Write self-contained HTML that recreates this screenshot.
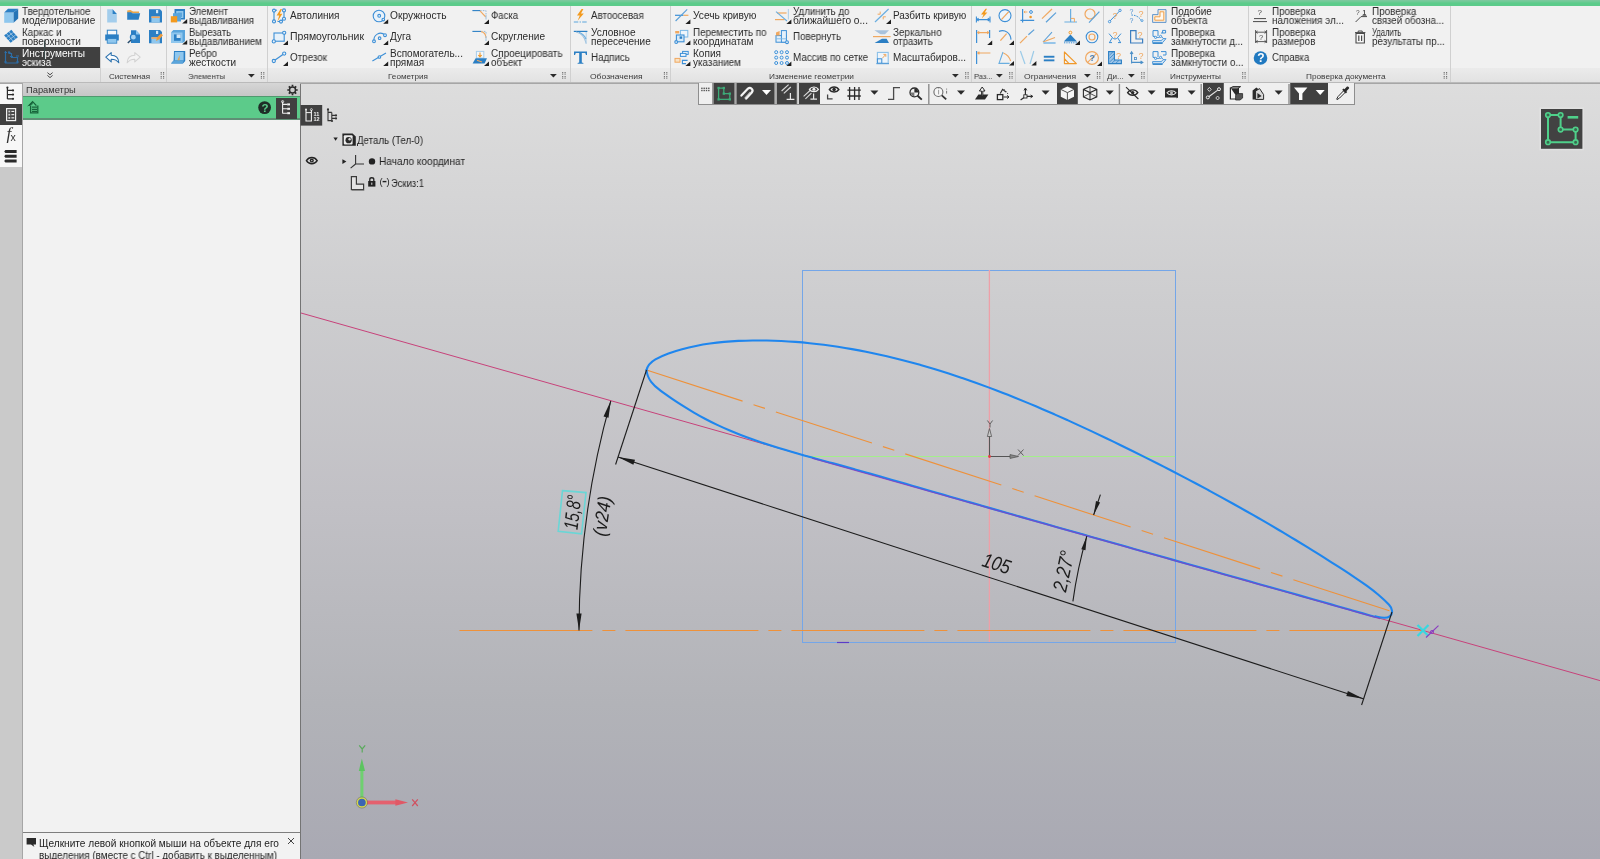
<!DOCTYPE html>
<html lang="ru"><head><meta charset="utf-8"><title>KOMPAS-3D</title><style>
html,body{margin:0;padding:0;}
html{width:1600px;height:859px;overflow:hidden;}
body{width:1600px;height:859px;overflow:hidden;position:relative;font-family:"Liberation Sans",sans-serif;background:#c8c8cc;}
.t{position:absolute;white-space:pre;line-height:1;transform-origin:0 0;will-change:transform;}
.a{position:absolute;}
svg{position:absolute;overflow:visible;}
</style></head><body>
<div id="root" style="position:absolute;left:0;top:0;width:1600px;height:859px;overflow:hidden;">
<div class="a" id="vp" style="left:0;top:83px;width:1600px;height:776px;background:linear-gradient(180deg,#dddddd 0%,#cdcdcf 28.6%,#c1c0c5 54.4%,#b2b3b8 80%,#a9a9b3 100%);"></div>
<div class="a" style="left:0;top:0;width:1600px;height:6px;background:linear-gradient(180deg,#80c8a0 0,#6ccb94 2px,#5ccb8a 3px,#5ccb8a 100%);"></div>
<div class="a" id="rib" style="left:0;top:6px;width:1600px;height:62px;background:#f1f1f1;"></div>
<div class="a" id="riblab" style="left:0;top:68px;width:1600px;height:14px;background:linear-gradient(180deg,#ebebeb,#e2e2e2);"></div>
<div class="a" style="left:0;top:82px;width:1600px;height:2px;background:linear-gradient(180deg,#c4c4c4,#9c9c9c);"></div>
<div class="a" style="left:100px;top:6px;width:1px;height:76px;background:#d0d0d0;"></div>
<div class="a" style="left:166px;top:6px;width:1px;height:76px;background:#d0d0d0;"></div>
<div class="a" style="left:267px;top:6px;width:1px;height:76px;background:#d0d0d0;"></div>
<div class="a" style="left:570px;top:6px;width:1px;height:76px;background:#d0d0d0;"></div>
<div class="a" style="left:670px;top:6px;width:1px;height:76px;background:#d0d0d0;"></div>
<div class="a" style="left:971px;top:6px;width:1px;height:76px;background:#d0d0d0;"></div>
<div class="a" style="left:1015px;top:6px;width:1px;height:76px;background:#d0d0d0;"></div>
<div class="a" style="left:1103px;top:6px;width:1px;height:76px;background:#d0d0d0;"></div>
<div class="a" style="left:1147px;top:6px;width:1px;height:76px;background:#d0d0d0;"></div>
<div class="a" style="left:1248px;top:6px;width:1px;height:76px;background:#d0d0d0;"></div>
<div class="a" style="left:1450px;top:6px;width:1px;height:76px;background:#d0d0d0;"></div>
<div class="a" style="left:0;top:47px;width:100px;height:21px;background:#404040;"></div>
<span class="t" style="left:22.0px;top:7.04px;font-size:10px;color:#2b2b2b;transform:scaleX(0.9740);">Твердотельное</span>
<span class="t" style="left:22.0px;top:16.04px;font-size:10px;color:#2b2b2b;transform:scaleX(0.9964);">моделирование</span>
<span class="t" style="left:22.0px;top:28.04px;font-size:10px;color:#2b2b2b;transform:scaleX(0.9761);">Каркас и</span>
<span class="t" style="left:22.0px;top:37.03px;font-size:10px;color:#2b2b2b;transform:scaleX(1.0096);">поверхности</span>
<span class="t" style="left:22.0px;top:49.03px;font-size:10px;color:#ffffff;transform:scaleX(1.0103);">Инструменты</span>
<span class="t" style="left:22.0px;top:58.03px;font-size:10px;color:#ffffff;transform:scaleX(0.9597);">эскиза</span>
<span class="t" style="left:189.0px;top:7.04px;font-size:10px;color:#2b2b2b;transform:scaleX(0.9560);">Элемент</span>
<span class="t" style="left:189.0px;top:16.04px;font-size:10px;color:#2b2b2b;transform:scaleX(0.9603);">выдавливания</span>
<span class="t" style="left:189.0px;top:28.04px;font-size:10px;color:#2b2b2b;transform:scaleX(0.9442);">Вырезать</span>
<span class="t" style="left:189.0px;top:37.03px;font-size:10px;color:#2b2b2b;transform:scaleX(0.9770);">выдавливанием</span>
<span class="t" style="left:189.0px;top:49.03px;font-size:10px;color:#2b2b2b;transform:scaleX(0.9814);">Ребро</span>
<span class="t" style="left:189.0px;top:58.03px;font-size:10px;color:#2b2b2b;transform:scaleX(0.9990);">жесткости</span>
<span class="t" style="left:290.0px;top:11.04px;font-size:10px;color:#2b2b2b;transform:scaleX(0.9994);">Автолиния</span>
<span class="t" style="left:290.0px;top:32.03px;font-size:10px;color:#2b2b2b;transform:scaleX(1.0469);">Прямоугольник</span>
<span class="t" style="left:290.0px;top:53.03px;font-size:10px;color:#2b2b2b;transform:scaleX(0.9822);">Отрезок</span>
<span class="t" style="left:390.0px;top:11.04px;font-size:10px;color:#2b2b2b;transform:scaleX(1.0220);">Окружность</span>
<span class="t" style="left:390.0px;top:32.03px;font-size:10px;color:#2b2b2b;transform:scaleX(1.0007);">Дуга</span>
<span class="t" style="left:390.0px;top:49.03px;font-size:10px;color:#2b2b2b;transform:scaleX(0.9940);">Вспомогатель...</span>
<span class="t" style="left:390.0px;top:58.03px;font-size:10px;color:#2b2b2b;transform:scaleX(0.9959);">прямая</span>
<span class="t" style="left:490.5px;top:11.04px;font-size:10px;color:#2b2b2b;transform:scaleX(0.9531);">Фаска</span>
<span class="t" style="left:490.5px;top:32.03px;font-size:10px;color:#2b2b2b;transform:scaleX(1.0085);">Скругление</span>
<span class="t" style="left:490.5px;top:49.03px;font-size:10px;color:#2b2b2b;transform:scaleX(0.9918);">Спроецировать</span>
<span class="t" style="left:490.5px;top:58.03px;font-size:10px;color:#2b2b2b;transform:scaleX(0.9798);">объект</span>
<span class="t" style="left:591.0px;top:11.04px;font-size:10px;color:#2b2b2b;transform:scaleX(0.9742);">Автоосевая</span>
<span class="t" style="left:591.0px;top:28.04px;font-size:10px;color:#2b2b2b;transform:scaleX(1.0078);">Условное</span>
<span class="t" style="left:591.0px;top:37.03px;font-size:10px;color:#2b2b2b;transform:scaleX(0.9986);">пересечение</span>
<span class="t" style="left:591.0px;top:53.03px;font-size:10px;color:#2b2b2b;transform:scaleX(0.9788);">Надпись</span>
<span class="t" style="left:692.5px;top:11.04px;font-size:10px;color:#2b2b2b;transform:scaleX(1.0203);">Усечь кривую</span>
<span class="t" style="left:692.5px;top:28.04px;font-size:10px;color:#2b2b2b;transform:scaleX(0.9796);">Переместить по</span>
<span class="t" style="left:692.5px;top:37.03px;font-size:10px;color:#2b2b2b;transform:scaleX(1.0060);">координатам</span>
<span class="t" style="left:692.5px;top:49.03px;font-size:10px;color:#2b2b2b;transform:scaleX(1.0067);">Копия</span>
<span class="t" style="left:692.5px;top:58.03px;font-size:10px;color:#2b2b2b;transform:scaleX(0.9846);">указанием</span>
<span class="t" style="left:793.0px;top:7.04px;font-size:10px;color:#2b2b2b;transform:scaleX(0.9757);">Удлинить до</span>
<span class="t" style="left:793.0px;top:16.04px;font-size:10px;color:#2b2b2b;transform:scaleX(1.0163);">ближайшего о...</span>
<span class="t" style="left:793.0px;top:32.03px;font-size:10px;color:#2b2b2b;transform:scaleX(0.9718);">Повернуть</span>
<span class="t" style="left:793.0px;top:53.03px;font-size:10px;color:#2b2b2b;transform:scaleX(0.9830);">Массив по сетке</span>
<span class="t" style="left:893.0px;top:11.04px;font-size:10px;color:#2b2b2b;transform:scaleX(0.9964);">Разбить кривую</span>
<span class="t" style="left:893.0px;top:28.04px;font-size:10px;color:#2b2b2b;transform:scaleX(0.9848);">Зеркально</span>
<span class="t" style="left:893.0px;top:37.03px;font-size:10px;color:#2b2b2b;transform:scaleX(0.9656);">отразить</span>
<span class="t" style="left:893.0px;top:53.03px;font-size:10px;color:#2b2b2b;transform:scaleX(0.9981);">Масштабиров...</span>
<span class="t" style="left:1170.5px;top:7.04px;font-size:10px;color:#2b2b2b;transform:scaleX(0.9923);">Подобие</span>
<span class="t" style="left:1170.5px;top:16.04px;font-size:10px;color:#2b2b2b;transform:scaleX(0.9786);">объекта</span>
<span class="t" style="left:1170.5px;top:28.04px;font-size:10px;color:#2b2b2b;transform:scaleX(0.9822);">Проверка</span>
<span class="t" style="left:1170.5px;top:37.03px;font-size:10px;color:#2b2b2b;transform:scaleX(0.9722);">замкнутости д...</span>
<span class="t" style="left:1170.5px;top:49.03px;font-size:10px;color:#2b2b2b;transform:scaleX(0.9822);">Проверка</span>
<span class="t" style="left:1170.5px;top:58.03px;font-size:10px;color:#2b2b2b;transform:scaleX(0.9824);">замкнутости о...</span>
<span class="t" style="left:1271.7px;top:7.04px;font-size:10px;color:#2b2b2b;transform:scaleX(0.9777);">Проверка</span>
<span class="t" style="left:1271.7px;top:16.04px;font-size:10px;color:#2b2b2b;transform:scaleX(0.9850);">наложения эл...</span>
<span class="t" style="left:1271.7px;top:28.04px;font-size:10px;color:#2b2b2b;transform:scaleX(0.9777);">Проверка</span>
<span class="t" style="left:1271.7px;top:37.03px;font-size:10px;color:#2b2b2b;transform:scaleX(0.9737);">размеров</span>
<span class="t" style="left:1271.7px;top:53.03px;font-size:10px;color:#2b2b2b;transform:scaleX(0.9507);">Справка</span>
<span class="t" style="left:1371.7px;top:7.04px;font-size:10px;color:#2b2b2b;transform:scaleX(0.9889);">Проверка</span>
<span class="t" style="left:1371.7px;top:16.04px;font-size:10px;color:#2b2b2b;transform:scaleX(0.9630);">связей обозна...</span>
<span class="t" style="left:1371.7px;top:28.04px;font-size:10px;color:#2b2b2b;transform:scaleX(0.7673);">Удалить</span>
<span class="t" style="left:1371.7px;top:37.03px;font-size:10px;color:#2b2b2b;transform:scaleX(0.9825);">результаты пр...</span>
<span class="t" style="left:109.0px;top:73.23px;font-size:8px;color:#3a3a3a;transform:scaleX(1.0008);">Системная</span>
<span class="t" style="left:188.0px;top:73.23px;font-size:8px;color:#3a3a3a;transform:scaleX(0.9638);">Элементы</span>
<span class="t" style="left:388.0px;top:73.23px;font-size:8px;color:#3a3a3a;transform:scaleX(1.0179);">Геометрия</span>
<span class="t" style="left:589.5px;top:73.23px;font-size:8px;color:#3a3a3a;transform:scaleX(1.0636);">Обозначения</span>
<span class="t" style="left:768.7px;top:73.23px;font-size:8px;color:#3a3a3a;transform:scaleX(1.0344);">Изменение геометрии</span>
<span class="t" style="left:974.0px;top:73.23px;font-size:8px;color:#3a3a3a;transform:scaleX(0.9360);">Раз...</span>
<span class="t" style="left:1024.0px;top:73.23px;font-size:8px;color:#3a3a3a;transform:scaleX(1.0663);">Ограничения</span>
<span class="t" style="left:1107.0px;top:73.23px;font-size:8px;color:#3a3a3a;transform:scaleX(1.0083);">Ди...</span>
<span class="t" style="left:1169.5px;top:73.23px;font-size:8px;color:#3a3a3a;transform:scaleX(1.0222);">Инструменты</span>
<span class="t" style="left:1305.5px;top:73.23px;font-size:8px;color:#3a3a3a;transform:scaleX(1.0316);">Проверка документа</span>
<svg style="left:247.6px;top:73.9px" width="6.8" height="3.6"><path d="M0 0H6.8L3.4 3.6Z" fill="#2b2b2b"/></svg>
<svg style="left:549.6px;top:73.9px" width="6.8" height="3.6"><path d="M0 0H6.8L3.4 3.6Z" fill="#2b2b2b"/></svg>
<svg style="left:951.6px;top:73.9px" width="6.8" height="3.6"><path d="M0 0H6.8L3.4 3.6Z" fill="#2b2b2b"/></svg>
<svg style="left:996.1px;top:73.9px" width="6.8" height="3.6"><path d="M0 0H6.8L3.4 3.6Z" fill="#2b2b2b"/></svg>
<svg style="left:1084.1px;top:73.9px" width="6.8" height="3.6"><path d="M0 0H6.8L3.4 3.6Z" fill="#2b2b2b"/></svg>
<svg style="left:1127.6px;top:73.9px" width="6.8" height="3.6"><path d="M0 0H6.8L3.4 3.6Z" fill="#2b2b2b"/></svg>
<svg style="left:0;top:0" width="1" height="1"><rect x="160.65" y="72.0" width="1.1" height="1.1" fill="#6e6e6e"/><rect x="160.65" y="73.6" width="1.1" height="1.1" fill="#6e6e6e"/><rect x="160.65" y="76.0" width="1.1" height="1.1" fill="#6e6e6e"/><rect x="160.65" y="77.6" width="1.1" height="1.1" fill="#6e6e6e"/><rect x="163.05" y="72.0" width="1.1" height="1.1" fill="#6e6e6e"/><rect x="163.05" y="73.6" width="1.1" height="1.1" fill="#6e6e6e"/><rect x="163.05" y="76.0" width="1.1" height="1.1" fill="#6e6e6e"/><rect x="163.05" y="77.6" width="1.1" height="1.1" fill="#6e6e6e"/></svg>
<svg style="left:0;top:0" width="1" height="1"><rect x="260.85" y="72.0" width="1.1" height="1.1" fill="#6e6e6e"/><rect x="260.85" y="73.6" width="1.1" height="1.1" fill="#6e6e6e"/><rect x="260.85" y="76.0" width="1.1" height="1.1" fill="#6e6e6e"/><rect x="260.85" y="77.6" width="1.1" height="1.1" fill="#6e6e6e"/><rect x="263.25" y="72.0" width="1.1" height="1.1" fill="#6e6e6e"/><rect x="263.25" y="73.6" width="1.1" height="1.1" fill="#6e6e6e"/><rect x="263.25" y="76.0" width="1.1" height="1.1" fill="#6e6e6e"/><rect x="263.25" y="77.6" width="1.1" height="1.1" fill="#6e6e6e"/></svg>
<svg style="left:0;top:0" width="1" height="1"><rect x="562.15" y="72.0" width="1.1" height="1.1" fill="#6e6e6e"/><rect x="562.15" y="73.6" width="1.1" height="1.1" fill="#6e6e6e"/><rect x="562.15" y="76.0" width="1.1" height="1.1" fill="#6e6e6e"/><rect x="562.15" y="77.6" width="1.1" height="1.1" fill="#6e6e6e"/><rect x="564.55" y="72.0" width="1.1" height="1.1" fill="#6e6e6e"/><rect x="564.55" y="73.6" width="1.1" height="1.1" fill="#6e6e6e"/><rect x="564.55" y="76.0" width="1.1" height="1.1" fill="#6e6e6e"/><rect x="564.55" y="77.6" width="1.1" height="1.1" fill="#6e6e6e"/></svg>
<svg style="left:0;top:0" width="1" height="1"><rect x="663.85" y="72.0" width="1.1" height="1.1" fill="#6e6e6e"/><rect x="663.85" y="73.6" width="1.1" height="1.1" fill="#6e6e6e"/><rect x="663.85" y="76.0" width="1.1" height="1.1" fill="#6e6e6e"/><rect x="663.85" y="77.6" width="1.1" height="1.1" fill="#6e6e6e"/><rect x="666.25" y="72.0" width="1.1" height="1.1" fill="#6e6e6e"/><rect x="666.25" y="73.6" width="1.1" height="1.1" fill="#6e6e6e"/><rect x="666.25" y="76.0" width="1.1" height="1.1" fill="#6e6e6e"/><rect x="666.25" y="77.6" width="1.1" height="1.1" fill="#6e6e6e"/></svg>
<svg style="left:0;top:0" width="1" height="1"><rect x="965.15" y="72.0" width="1.1" height="1.1" fill="#6e6e6e"/><rect x="965.15" y="73.6" width="1.1" height="1.1" fill="#6e6e6e"/><rect x="965.15" y="76.0" width="1.1" height="1.1" fill="#6e6e6e"/><rect x="965.15" y="77.6" width="1.1" height="1.1" fill="#6e6e6e"/><rect x="967.55" y="72.0" width="1.1" height="1.1" fill="#6e6e6e"/><rect x="967.55" y="73.6" width="1.1" height="1.1" fill="#6e6e6e"/><rect x="967.55" y="76.0" width="1.1" height="1.1" fill="#6e6e6e"/><rect x="967.55" y="77.6" width="1.1" height="1.1" fill="#6e6e6e"/></svg>
<svg style="left:0;top:0" width="1" height="1"><rect x="1009.15" y="72.0" width="1.1" height="1.1" fill="#6e6e6e"/><rect x="1009.15" y="73.6" width="1.1" height="1.1" fill="#6e6e6e"/><rect x="1009.15" y="76.0" width="1.1" height="1.1" fill="#6e6e6e"/><rect x="1009.15" y="77.6" width="1.1" height="1.1" fill="#6e6e6e"/><rect x="1011.55" y="72.0" width="1.1" height="1.1" fill="#6e6e6e"/><rect x="1011.55" y="73.6" width="1.1" height="1.1" fill="#6e6e6e"/><rect x="1011.55" y="76.0" width="1.1" height="1.1" fill="#6e6e6e"/><rect x="1011.55" y="77.6" width="1.1" height="1.1" fill="#6e6e6e"/></svg>
<svg style="left:0;top:0" width="1" height="1"><rect x="1096.85" y="72.0" width="1.1" height="1.1" fill="#6e6e6e"/><rect x="1096.85" y="73.6" width="1.1" height="1.1" fill="#6e6e6e"/><rect x="1096.85" y="76.0" width="1.1" height="1.1" fill="#6e6e6e"/><rect x="1096.85" y="77.6" width="1.1" height="1.1" fill="#6e6e6e"/><rect x="1099.25" y="72.0" width="1.1" height="1.1" fill="#6e6e6e"/><rect x="1099.25" y="73.6" width="1.1" height="1.1" fill="#6e6e6e"/><rect x="1099.25" y="76.0" width="1.1" height="1.1" fill="#6e6e6e"/><rect x="1099.25" y="77.6" width="1.1" height="1.1" fill="#6e6e6e"/></svg>
<svg style="left:0;top:0" width="1" height="1"><rect x="1141.15" y="72.0" width="1.1" height="1.1" fill="#6e6e6e"/><rect x="1141.15" y="73.6" width="1.1" height="1.1" fill="#6e6e6e"/><rect x="1141.15" y="76.0" width="1.1" height="1.1" fill="#6e6e6e"/><rect x="1141.15" y="77.6" width="1.1" height="1.1" fill="#6e6e6e"/><rect x="1143.55" y="72.0" width="1.1" height="1.1" fill="#6e6e6e"/><rect x="1143.55" y="73.6" width="1.1" height="1.1" fill="#6e6e6e"/><rect x="1143.55" y="76.0" width="1.1" height="1.1" fill="#6e6e6e"/><rect x="1143.55" y="77.6" width="1.1" height="1.1" fill="#6e6e6e"/></svg>
<svg style="left:0;top:0" width="1" height="1"><rect x="1242.15" y="72.0" width="1.1" height="1.1" fill="#6e6e6e"/><rect x="1242.15" y="73.6" width="1.1" height="1.1" fill="#6e6e6e"/><rect x="1242.15" y="76.0" width="1.1" height="1.1" fill="#6e6e6e"/><rect x="1242.15" y="77.6" width="1.1" height="1.1" fill="#6e6e6e"/><rect x="1244.55" y="72.0" width="1.1" height="1.1" fill="#6e6e6e"/><rect x="1244.55" y="73.6" width="1.1" height="1.1" fill="#6e6e6e"/><rect x="1244.55" y="76.0" width="1.1" height="1.1" fill="#6e6e6e"/><rect x="1244.55" y="77.6" width="1.1" height="1.1" fill="#6e6e6e"/></svg>
<svg style="left:0;top:0" width="1" height="1"><rect x="1443.65" y="72.0" width="1.1" height="1.1" fill="#6e6e6e"/><rect x="1443.65" y="73.6" width="1.1" height="1.1" fill="#6e6e6e"/><rect x="1443.65" y="76.0" width="1.1" height="1.1" fill="#6e6e6e"/><rect x="1443.65" y="77.6" width="1.1" height="1.1" fill="#6e6e6e"/><rect x="1446.05" y="72.0" width="1.1" height="1.1" fill="#6e6e6e"/><rect x="1446.05" y="73.6" width="1.1" height="1.1" fill="#6e6e6e"/><rect x="1446.05" y="76.0" width="1.1" height="1.1" fill="#6e6e6e"/><rect x="1446.05" y="77.6" width="1.1" height="1.1" fill="#6e6e6e"/></svg>
<svg style="left:47.2px;top:72.2px" width="7" height="7"><path d="M0.4 0.6 L3 2.8 L5.6 0.6 M0.4 3.4 L3 5.6 L5.6 3.4" fill="none" stroke="#3a3a3a" stroke-width="0.9"/></svg>
<div class="a" style="left:0;top:84px;width:22px;height:775px;background:#cacaca;"></div>
<div class="a" style="left:0;top:84px;width:22px;height:83px;background:#f7f7f7;"></div>
<div class="a" style="left:0;top:104px;width:22px;height:21px;background:#404040;"></div>
<div class="a" style="left:21.5px;top:84px;width:1.5px;height:775px;background:#a6a6a6;"></div>
<div class="a" style="left:23px;top:84px;width:277px;height:775px;background:#f2f2f2;"></div>
<div class="a" style="left:23px;top:83px;width:277px;height:13.3px;background:linear-gradient(180deg,#d6d6d6,#c6c6c6);"></div>
<div class="a" style="left:23px;top:97px;width:277px;height:22px;background:#5ccb8a;"></div>
<div class="a" style="left:23px;top:96.2px;width:277px;height:1px;background:#4f9a6e;"></div>
<div class="a" style="left:23px;top:118px;width:277px;height:2px;background:#5f8f75;"></div>
<div class="a" style="left:276.2px;top:97.5px;width:21px;height:21px;background:#404040;"></div>
<div class="a" style="left:299.7px;top:84px;width:1.3px;height:775px;background:#747474;"></div>
<div class="a" style="left:23px;top:832px;width:277px;height:1px;background:#7e7e7e;"></div>
<span class="t" style="left:25.8px;top:86.38px;font-size:9px;color:#333;transform:scaleX(1.0378);">Параметры</span>
<span class="t" style="left:39.0px;top:839.03px;font-size:10px;color:#222;transform:scaleX(1.0112);">Щелкните левой кнопкой мыши на объекте для его</span>
<span class="t" style="left:39.0px;top:851.03px;font-size:10px;color:#222;transform:scaleX(0.9846);">выделения (вместе с Ctrl - добавить к выделенным)</span>
<span class="t" style="left:357.0px;top:135.11px;font-size:10.5px;color:#222;transform:scaleX(0.9241);">Деталь (Тел-0)</span>
<span class="t" style="left:378.5px;top:156.41px;font-size:10.5px;color:#222;transform:scaleX(0.9587);">Начало координат</span>
<span class="t" style="left:390.5px;top:177.91px;font-size:10.5px;color:#222;transform:scaleX(0.8961);">Эскиз:1</span>
<svg style="left:0;top:0" width="1600" height="83" viewBox="0 0 1600 83"><path d="M4.2 12.6H13.6V22.8H4.2Z" fill="#8fc7ee"/><path d="M4.2 12.6L8 8.8H18.2L13.6 12.6Z" fill="#2b7fc4"/><path d="M13.6 12.6L18.2 8.8V18.6L13.6 22.8Z" fill="#2574b6"/><path d="M4.11 35.36L6.36 33.65L8.39 35.94L6.14 37.65Z" fill="#2b7fc4"/><path d="M6.36 37.91L8.61 36.20L10.64 38.49L8.39 40.20Z" fill="#2b7fc4"/><path d="M8.61 40.46L10.86 38.75L12.89 41.04L10.64 42.75Z" fill="#2b7fc4"/><path d="M6.61 33.46L8.86 31.75L10.89 34.04L8.64 35.75Z" fill="#2b7fc4"/><path d="M8.86 36.01L11.11 34.30L13.14 36.59L10.89 38.30Z" fill="#2b7fc4"/><path d="M11.11 38.56L13.36 36.85L15.39 39.14L13.14 40.85Z" fill="#2b7fc4"/><path d="M9.11 31.56L11.36 29.85L13.39 32.14L11.14 33.85Z" fill="#2b7fc4"/><path d="M11.36 34.11L13.61 32.40L15.64 34.69L13.39 36.40Z" fill="#2b7fc4"/><path d="M13.61 36.66L15.86 34.95L17.89 37.24L15.64 38.95Z" fill="#2b7fc4"/><path d="M5.5 51V63H17.5V57.5H11.5V53.5H9V51" fill="none" stroke="#2c6da5" stroke-width="1.2"/><path d="M4.5 52.5H7M8 52.5H10.5M10 56.5H13M16 56H19M4 62H7M16 62H19" stroke="#2c6da5" stroke-width="1.1"/><path d="M44.5 40.5V59.5" stroke="#3a4a4a" stroke-width="1"/><path d="M107.2 9.2H112.6L116.8 14V22.4H107.2Z" fill="#a3cdec"/><path d="M112.6 9.2L116.8 14H112.6Z" fill="#2b7fc4"/><path d="M127.2 10.6L130.5 10L133 11.6H139V13H127.2Z" fill="#e9a54a"/><path d="M127.2 12.2H131L132.5 13.2H140.2L138.6 19.7H127.2Z" fill="#2b7fc4"/><path d="M149 9.2H160L162 11.2V22.4H149Z" fill="#2b7fc4"/><rect x="151.4" y="16.4" width="8.4" height="6" fill="#8fc7ee"/><rect x="151.4" y="16.4" width="8.4" height="1.6" fill="#f0a860"/><rect x="156" y="10.0" width="2.2" height="3.2" fill="#cfe6f7"/><rect x="107.3" y="30.2" width="9.4" height="5" fill="#f4f8fb" stroke="#2b7fc4" stroke-width="1"/><path d="M105.2 34.5H118.8V40.5H105.2Z" fill="#2b7fc4"/><rect x="107.2" y="38.6" width="9.6" height="4.6" fill="#8fc7ee" stroke="#2b7fc4" stroke-width="0.8"/><path d="M131 30.2H136L140 34.5V43H131Z" fill="#2b7fc4"/><path d="M136 30.2L140 34.5H136Z" fill="#8fc7ee"/><circle cx="133.4" cy="37.2" r="3" fill="#a7d3f2" stroke="#2b7fc4" stroke-width="1.2"/><path d="M131 40L127.8 43" stroke="#2a4e6e" stroke-width="1.5"/><path d="M149 30H160L162 32V43.2H149Z" fill="#2b7fc4"/><rect x="151.4" y="37.2" width="8.4" height="6" fill="#8fc7ee"/><rect x="151.4" y="37.2" width="8.4" height="1.6" fill="#f0a860"/><rect x="156" y="30.8" width="2.2" height="3.2" fill="#cfe6f7"/><path d="M156 41L157 37.6L161 33.4L163 35.2L159 39.6Z" fill="#ee9a3a"/><path d="M105.8 57.2L111.2 52.6V55.3C115.5 55.3 118.6 58 118.8 62.8C117.2 60.3 115 59.2 111.2 59.2V61.9Z" fill="#fbfdff" stroke="#2b70ad" stroke-width="1.1" stroke-linejoin="round"/><path d="M140.2 57.2L134.8 52.6V55.3C130.5 55.3 127.4 58 127.2 62.8C128.8 60.3 131 59.2 134.8 59.2V61.9Z" fill="#f4f4f4" stroke="#d2d2d2" stroke-width="1.1" stroke-linejoin="round"/><path d="M174.5 9H185V19.5H174.5Z" fill="#2b7fc4"/><path d="M176.2 11H183.4V18H176.2Z" fill="#8fc7ee"/><path d="M177.8 12.6H182V17H177.8Z" fill="#5aa5dc"/><path d="M173 13.2H181V21.5H173Z" fill="#5aa5dc"/><rect x="170.8" y="16.2" width="6.4" height="6.2" fill="#f39a1e"/><path d="M187.2 23.6H182.2L187.2 19.1Z" fill="#1e1e1e"/><path d="M173.5 30H185V41L182.5 43H171V32.5Z" fill="#8fc7ee"/><path d="M173.5 30H185V41L182.5 43V32.5H171Z" fill="#5aa5dc"/><rect x="174" y="34.4" width="6.6" height="6.4" fill="#2b7fc4"/><rect x="176.6" y="34.4" width="4" height="3.6" fill="#cfe6f7"/><path d="M187.2 44.6H182.2L187.2 40.1Z" fill="#1e1e1e"/><path d="M174 51H185.2V61L183 63.4H171L173.6 60.6Z" fill="#2b7fc4"/><path d="M174.8 52H183.6V60.4H174.8Z" fill="#8fc7ee"/><path d="M171 63.4L173.6 60.6H183.8L182.6 63.4Z" fill="#5aa5dc"/><path d="M177.5 60.2L179.6 55V60.2Z" fill="#e9a54a"/><path d="M274 11V21.5M274 11L277 10M284 10.5V18.5M281 21.5L284 18.5M277.5 21.5H281" fill="none" stroke="#3d8fd6" stroke-width="1.1"/><circle cx="274" cy="10.6" r="1.5" fill="#eaf3fb" stroke="#3d8fd6" stroke-width="1.1"/><circle cx="284" cy="10.4" r="1.5" fill="#eaf3fb" stroke="#3d8fd6" stroke-width="1.1"/><circle cx="274" cy="21.4" r="1.5" fill="#eaf3fb" stroke="#3d8fd6" stroke-width="1.1"/><circle cx="284" cy="18.8" r="1.5" fill="#eaf3fb" stroke="#3d8fd6" stroke-width="1.1"/><circle cx="281" cy="21.6" r="1.5" fill="#eaf3fb" stroke="#3d8fd6" stroke-width="1.1"/><path d="M280.6 9L276.6 15.6H279.2L277.4 21.4L282.4 13.8H279.8L282 9Z" fill="#f39a1e"/><rect x="274" y="33" width="10.2" height="8.2" fill="#e6f1fa" stroke="#3d8fd6" stroke-width="1.1"/><circle cx="284.2" cy="32.8" r="1.6" fill="#eaf3fb" stroke="#3d8fd6" stroke-width="1.1"/><circle cx="273.8" cy="41.4" r="1.6" fill="#eaf3fb" stroke="#3d8fd6" stroke-width="1.1"/><path d="M288 45H283L288 40.5Z" fill="#1e1e1e"/><path d="M274 60.8L284 53.8" stroke="#3d8fd6" stroke-width="1.2"/><circle cx="273.8" cy="61" r="1.6" fill="#eaf3fb" stroke="#3d8fd6" stroke-width="1.1"/><circle cx="284.2" cy="53.6" r="1.6" fill="#eaf3fb" stroke="#3d8fd6" stroke-width="1.1"/><path d="M288 66H283L288 61.5Z" fill="#1e1e1e"/><circle cx="379" cy="16" r="5.8" fill="#e9f2fa" stroke="#3d8fd6" stroke-width="1.1"/><circle cx="379.2" cy="15.8" r="1.4" fill="#eaf3fb" stroke="#3d8fd6" stroke-width="1.1"/><circle cx="383.3" cy="19.6" r="1.3" fill="#eaf3fb" stroke="#3d8fd6" stroke-width="1.1"/><path d="M388.2 23.8H383.2L388.2 19.3Z" fill="#1e1e1e"/><path d="M374 41.5C373 35 380 30.5 385 35" fill="none" stroke="#3d8fd6" stroke-width="1.1"/><circle cx="374" cy="41.3" r="1.4" fill="#eaf3fb" stroke="#3d8fd6" stroke-width="1.1"/><circle cx="385" cy="35.2" r="1.4" fill="#eaf3fb" stroke="#3d8fd6" stroke-width="1.1"/><circle cx="379.6" cy="38.2" r="1.3" fill="#eaf3fb" stroke="#3d8fd6" stroke-width="1.1"/><path d="M388.2 45H383.2L388.2 40.5Z" fill="#1e1e1e"/><path d="M372.4 61L386 53" stroke="#3d8fd6" stroke-width="1.1"/><circle cx="379.4" cy="57" r="1.3" fill="#eaf3fb" stroke="#3d8fd6" stroke-width="1.1"/><path d="M388.2 66H383.2L388.2 61.5Z" fill="#1e1e1e"/><path d="M472.4 10.6H480" stroke="#2b7fc4" stroke-width="1.1"/><path d="M480 10.6H486V14" stroke="#8ab4d6" stroke-width="0.9" stroke-dasharray="1.6 1.2" fill="none"/><path d="M480 10.8L485.8 17" stroke="#f0a860" stroke-width="1.1"/><path d="M486 14.5V19.5" stroke="#9cc0de" stroke-width="1"/><path d="M489 24H484L489 19.5Z" fill="#1e1e1e"/><path d="M472.4 31.4H481" stroke="#2b7fc4" stroke-width="1.1"/><path d="M481 31.4H486V35" stroke="#8ab4d6" stroke-width="0.9" stroke-dasharray="1.6 1.2" fill="none"/><path d="M481 31.6C484.5 32 485.8 34.5 486 38" stroke="#f0a860" stroke-width="1.1" fill="none"/><path d="M486 36V41" stroke="#9cc0de" stroke-width="1"/><path d="M489 45H484L489 40.5Z" fill="#1e1e1e"/><rect x="476.4" y="51.4" width="7.4" height="6.6" fill="#f2f7fb" stroke="#a9cdea" stroke-width="1"/><path d="M480 52.5V56.5M478.3 55L480 57L481.7 55" stroke="#f0982a" stroke-width="1.1" fill="none"/><path d="M475.6 58.2H487L484.6 63.6H472.6Z" fill="#2b7fc4"/><path d="M477 60.2L482 62" stroke="#f0a860" stroke-width="1.1"/><path d="M489 66H484L489 61.5Z" fill="#1e1e1e"/><path d="M581.6 9L577 15.6H579.8L577.6 20.8L583.8 13.6H581L583.4 9Z" fill="#f39a1e"/><path d="M573.8 22H587" stroke="#5aa5dc" stroke-width="1" stroke-dasharray="4.5 1.3 1.3 1.3"/><path d="M573.8 31.4H587.4" stroke="#2b7fc4" stroke-width="1.2"/><path d="M576 32C580.5 33 585 37 586.2 43.6" stroke="#9cc0de" stroke-width="1.1" fill="none"/><path d="M586.2 32V43.6" stroke="#b5d2e8" stroke-width="1" /><path d="M579 32.2C581.8 33.2 584.6 35.5 586 39" stroke="#6aaee0" stroke-width="1.1" fill="none"/><path d="M574 51.4H587V55H586L585.2 53H581.8V62.4L583.4 62.9V63.8H577.6V62.9L579.2 62.4V53H575.8L575 55H574Z" fill="#2b7fc4"/></svg>
<svg style="left:0;top:0" width="1600" height="83" viewBox="0 0 1600 83"><path d="M675 15.3H683.5" fill="none" stroke="#3d8fd6" stroke-width="1.2" /><path d="M683.5 15.3H688.4" fill="none" stroke="#f0a860" stroke-width="1.2" /><path d="M675.6 21L687.2 9.4" fill="none" stroke="#5a9fd8" stroke-width="1.1" /><path d="M690.4 24H685.4L690.4 19.5Z" fill="#1e1e1e"/><rect x="675.2" y="31" width="4" height="2.4" fill="#f0a860"/><rect x="680.4" y="30.4" width="7.4" height="6.6" fill="#eef5fb" stroke="#7db8e6" stroke-width="1"/><rect x="676.4" y="35" width="7.6" height="6.8" fill="#d8eaf8" stroke="#3d8fd6" stroke-width="1.1"/><rect x="679.6" y="36.4" width="2.6" height="2.4" fill="#2b7fc4"/><circle cx="676.2" cy="42" r="1.4" fill="#eaf3fb" stroke="#3d8fd6" stroke-width="1.1"/><path d="M690.4 45H685.4L690.4 40.5Z" fill="#1e1e1e"/><rect x="682.6" y="51.4" width="5.6" height="3" fill="#eef5fb" stroke="#3d8fd6" stroke-width="1"/><rect x="680.4" y="53.4" width="5.6" height="3" fill="#eef5fb" stroke="#3d8fd6" stroke-width="1"/><rect x="675" y="58.4" width="5" height="3.8" fill="#f8e2c4" stroke="#f0a860" stroke-width="1"/><path d="M687.6 60.4H682.4V63.6H686" fill="none" stroke="#3d8fd6" stroke-width="1.1" /><path d="M690.4 66H685.4L690.4 61.5Z" fill="#1e1e1e"/><path d="M777 13H786.6" fill="none" stroke="#f0a860" stroke-width="1.2" /><path d="M775 19.6H784.6" fill="none" stroke="#f0a860" stroke-width="1.2" /><path d="M776 11.6L787 21" fill="none" stroke="#6aaee0" stroke-width="1.1" /><path d="M788.4 9V19.6" fill="none" stroke="#b5d2e8" stroke-width="1.2" /><path d="M791.4 24H786.4L791.4 19.5Z" fill="#1e1e1e"/><rect x="776" y="35.6" width="10.4" height="6.6" fill="#e4f0fa" stroke="#3d8fd6" stroke-width="1"/><rect x="781.4" y="30.6" width="5" height="11.6" fill="#e4f0fa" stroke="#3d8fd6" stroke-width="1"/><path d="M776 35.6V32.4L779.6 31V35.6Z" fill="#f0a860"/><path d="M776 38.8H786.4" fill="none" stroke="#7db8e6" stroke-width="0.9" /><circle cx="787" cy="42.2" r="1.4" fill="#eaf3fb" stroke="#3d8fd6" stroke-width="1.1"/><circle cx="776.2" cy="52.2" r="1.5" fill="#eaf3fb" stroke="#3d8fd6" stroke-width="1"/><circle cx="776.2" cy="57.6" r="1.5" fill="#eaf3fb" stroke="#3d8fd6" stroke-width="1"/><circle cx="776.2" cy="63" r="1.5" fill="#eaf3fb" stroke="#3d8fd6" stroke-width="1"/><circle cx="781.6" cy="52.2" r="1.5" fill="#eaf3fb" stroke="#3d8fd6" stroke-width="1"/><circle cx="781.6" cy="57.6" r="1.5" fill="#eaf3fb" stroke="#3d8fd6" stroke-width="1"/><circle cx="781.6" cy="63" r="1.5" fill="#eaf3fb" stroke="#3d8fd6" stroke-width="1"/><circle cx="787" cy="52.2" r="1.5" fill="#eaf3fb" stroke="#3d8fd6" stroke-width="1"/><circle cx="787" cy="57.6" r="1.5" fill="#eaf3fb" stroke="#3d8fd6" stroke-width="1"/><circle cx="787" cy="63" r="1.5" fill="#eaf3fb" stroke="#3d8fd6" stroke-width="1"/><path d="M791.4 66H786.4L791.4 61.5Z" fill="#1e1e1e"/><path d="M875 22L888.6 9" fill="none" stroke="#6aaee0" stroke-width="1.2" /><path d="M877.6 14.2H880.2V11.6" fill="none" stroke="#f0a860" stroke-width="1" /><path d="M883.2 19.4V16.8H885.8" fill="none" stroke="#f0a860" stroke-width="1" /><path d="M891 24H886L891 19.5Z" fill="#1e1e1e"/><path d="M874.4 30.2H889L885 34.2H880.6Z" fill="#a8c2dc"/><path d="M873 36.6H890.6" fill="none" stroke="#f0a860" stroke-width="1.2" /><path d="M874.6 43H889L886.6 38.8H882Z" fill="#2b7fc4"/><rect x="877.4" y="52.4" width="10.8" height="10.8" fill="#eef5fb" stroke="#8cc0e8" stroke-width="1.1"/><rect x="877.4" y="58.8" width="4.4" height="4.4" fill="#e4f0fa" stroke="#3d8fd6" stroke-width="1"/><path d="M882.4 58.2L885.6 54.6M883.4 54.4H885.8V56.8" fill="none" stroke="#f0a860" stroke-width="1" /><path d="M876.4 63.6H889" fill="none" stroke="#5a9fd8" stroke-width="1.2" /><path d="M985.6 8.8L981 14.4H983.6L981.8 18.6L987.4 12.6H984.8L987 8.8Z" fill="#f39a1e"/><path d="M976.4 16.4V22.4M990 16.4V22.4M976.4 19.6H990M978.6 18.2L976.8 19.6L978.6 21M987.8 18.2L989.6 19.6L987.8 21" fill="none" stroke="#3d8fd6" stroke-width="1.1" /><circle cx="1005" cy="15.6" r="6" fill="#eef5fb" stroke="#3d8fd6" stroke-width="1.1"/><path d="M1001.4 19.6L1008.8 11.6" fill="none" stroke="#f0a860" stroke-width="1.3" /><path d="M976.6 30V43M989.6 30V38" fill="none" stroke="#3d8fd6" stroke-width="1.2" /><path d="M977.4 32.6H989M979.2 31.4L977.6 32.6L979.2 33.8M987.2 31.4L988.8 32.6L987.2 33.8" fill="none" stroke="#f0a860" stroke-width="1.1" /><path d="M992.2 45H987.2L992.2 40.5Z" fill="#1e1e1e"/><path d="M999 31.4C1005 29 1010.6 33 1011 39.6" fill="none" stroke="#3d8fd6" stroke-width="1.2" /><path d="M1000.4 40.6L1006.6 33.6" fill="none" stroke="#f0a860" stroke-width="1.3" /><path d="M1014 45H1009L1014 40.5Z" fill="#1e1e1e"/><path d="M976.6 51V64" fill="none" stroke="#3d8fd6" stroke-width="1.2" /><path d="M977.4 53H990.4M979.4 51.8L977.8 53L979.4 54.2" fill="none" stroke="#f0a860" stroke-width="1.1" /><path d="M1003 52L999 63.4H1009.6" fill="none" stroke="#6aaee0" stroke-width="1.1" /><path d="M1003.4 53C1007 54.5 1009.6 57.5 1010.6 61" fill="none" stroke="#f0a860" stroke-width="1.2" /><path d="M1014 65.6H1009L1014 61.099999999999994Z" fill="#1e1e1e"/><path d="M1022.6 9V22.4M1020.4 20.3H1034.2" fill="none" stroke="#3d8fd6" stroke-width="1.2" /><circle cx="1031" cy="12" r="1.4" fill="#eaf3fb" stroke="#3d8fd6" stroke-width="1"/><circle cx="1030.6" cy="17" r="1.3" fill="#f0982a"/><path d="M1024 12H1027.4M1025.2 10.9L1024 12L1025.2 13.1" fill="none" stroke="#f0a860" stroke-width="0.9" /><path d="M1042 18.6L1052 9" fill="none" stroke="#f0a860" stroke-width="1.2" /><path d="M1046 22.2L1056 12.6" fill="none" stroke="#5a9fd8" stroke-width="1.2" /><path d="M1070.6 9V22M1064.4 22H1077" fill="none" stroke="#6aaee0" stroke-width="1.2" /><path d="M1070.8 18.4H1074.4V22" fill="none" stroke="#f0a860" stroke-width="1" /><circle cx="1090" cy="14" r="5" fill="none" stroke="#f0a860" stroke-width="1.2"/><path d="M1089 22.6L1099.4 11.6" fill="none" stroke="#5a9fd8" stroke-width="1.2" /><path d="M1020 43.2L1027 36.2" fill="none" stroke="#f0a860" stroke-width="1.2" /><path d="M1028.4 34.8L1034.2 29.6" fill="none" stroke="#5a9fd8" stroke-width="1.2" /><path d="M1043 42L1052 32.2" fill="none" stroke="#5a9fd8" stroke-width="1.1" /><path d="M1043 42L1055 37.4" fill="none" stroke="#f0a860" stroke-width="1.1" /><path d="M1043.4 43H1055.6" fill="none" stroke="#8cc0e8" stroke-width="1.8" /><path d="M1070.4 34.6L1077 41.4H1063.8Z" fill="#2b7fc4"/><path d="M1064 42.8H1077" fill="none" stroke="#3d8fd6" stroke-width="1" stroke-dasharray="1.3 1"/><circle cx="1070.4" cy="32.6" r="1.4" fill="#fdf3e4" stroke="#f0982a" stroke-width="1"/><path d="M1080 45H1075L1080 40.5Z" fill="#1e1e1e"/><circle cx="1092" cy="37" r="5.8" fill="none" stroke="#3d8fd6" stroke-width="1.1"/><circle cx="1092" cy="37" r="3" fill="none" stroke="#f0a860" stroke-width="1.2"/><path d="M1020.4 51L1025 64" fill="none" stroke="#9ccbe8" stroke-width="1.2" /><path d="M1033.8 51L1030 64" fill="none" stroke="#9ccbe8" stroke-width="1.2" /><path d="M1036.4 65.4H1031.4L1036.4 60.900000000000006Z" fill="#1e1e1e"/><rect x="1043.8" y="55.8" width="10.6" height="1.9" fill="#2b7fc4"/><rect x="1043.8" y="59.4" width="10.6" height="1.9" fill="#2b7fc4"/><path d="M1064.4 52V63.6H1076.4Z M1064.4 58.6L1069 63.6" fill="none" stroke="#f0982a" stroke-width="1.1" stroke-linejoin="round"/><circle cx="1092" cy="58" r="6.4" fill="none" stroke="#f0a860" stroke-width="1.2"/><path d="M1087.4 62.6L1096.6 53.4" fill="none" stroke="#f0a860" stroke-width="1.1" /><text x="1089.6" y="61.4" font-family="Liberation Sans" font-size="9" font-weight="bold" fill="#4a7fb4">?</text><path d="M1102 66H1097L1102 61.5Z" fill="#1e1e1e"/><path d="M1110 21L1119.6 11" fill="none" stroke="#3d8fd6" stroke-width="1" /><circle cx="1109.6" cy="21.6" r="1.2" fill="#eaf3fb" stroke="#3d8fd6" stroke-width="0.9"/><circle cx="1120" cy="10.4" r="1.2" fill="#eaf3fb" stroke="#3d8fd6" stroke-width="0.9"/><text x="1112.6" y="19.4" font-family="Liberation Sans" font-size="9"  fill="#f0a860">?</text><path d="M1131.4 15C1136 15 1140 17.5 1141.4 21" fill="none" stroke="#3d8fd6" stroke-width="1" stroke-dasharray="1.6 1"/><text x="1129.4" y="13.6" font-family="Liberation Sans" font-size="7"  fill="#4a8fd0">?</text><text x="1129.4" y="22.6" font-family="Liberation Sans" font-size="7"  fill="#4a8fd0">?</text><text x="1138.6" y="17" font-family="Liberation Sans" font-size="9"  fill="#f0a860">?</text><circle cx="1142" cy="20.6" r="1" fill="#eaf3fb" stroke="#3d8fd6" stroke-width="0.8"/><path d="M1109 33.6L1112.4 37.6L1109.4 42.6M1121 33.6L1117.6 37.6L1120.6 42.6M1112.4 37.6C1114 39.5 1116 39.5 1117.6 37.6M1109 42.6H1112M1118 42.6H1121" fill="none" stroke="#3d8fd6" stroke-width="1" /><text x="1112.4" y="37.6" font-family="Liberation Sans" font-size="9"  fill="#f0a860">?</text><path d="M1130.6 30.6H1136V39H1142.6V43H1130.6Z" fill="none" stroke="#3d7fc0" stroke-width="1.2" /><text x="1137.6" y="38" font-family="Liberation Sans" font-size="9"  fill="#f0a860">?</text><path d="M1108.6 51.6H1114.4V60H1121.4V63.6H1108.6Z" fill="#9cc4e8" stroke="#2b7fc4" stroke-width="1.1"/><path d="M1109.6 55L1113 51.8M1109.6 58.4L1114 54M1109.6 62L1114.4 57.4M1112 63L1115.4 60M1116 63L1119 60.4" fill="none" stroke="#2b7fc4" stroke-width="0.7" /><text x="1116" y="59" font-family="Liberation Sans" font-size="9"  fill="#f0a860">?</text><path d="M1131.6 63.4V52M1131.6 62.4H1142.6M1130.2 54L1131.6 51.8L1133 54M1140.6 61L1142.8 62.4L1140.6 63.8" fill="none" stroke="#4a8fc8" stroke-width="1.1" /><rect x="1134.4" y="57.4" width="2.2" height="2.2" fill="none" stroke="#4a8fc8" stroke-width="0.8"/><text x="1138.4" y="59" font-family="Liberation Sans" font-size="9"  fill="#f0a860">?</text><path d="M1158 9.6H1166V22.4H1152.6V14.6H1158Z" fill="#fcecd8" stroke="#4f8ccc" stroke-width="0.9"/><path d="M1160 11.8H1163.8V20.2H1154.8V16.8H1160Z" fill="#fff8ee" stroke="#eea04c" stroke-width="1"/><path d="M1153 30.6H1158V36M1153 30.6V36.4H1155" fill="none" stroke="#3d8fd6" stroke-width="1" /><path d="M1161 33H1165.6V30.4H1162.6V33" fill="none" stroke="#3d8fd6" stroke-width="1" /><circle cx="1155.6" cy="37.4" r="1.1" fill="#eaf3fb" stroke="#3d8fd6" stroke-width="0.9"/><circle cx="1160.6" cy="36.4" r="1.1" fill="#eaf3fb" stroke="#3d8fd6" stroke-width="0.9"/><path d="M1156.6 37.4H1159.6M1161.6 36.8L1163 38" fill="none" stroke="#3d8fd6" stroke-width="0.9" /><path d="M1152.6 42.6H1162.6L1166 38.6H1163L1161.4 40.6H1152.6Z" fill="#cfe4f6" stroke="#3d8fd6" stroke-width="0.9"/><path d="M1152.6 43.4H1162.6" fill="none" stroke="#2b7fc4" stroke-width="1" /><path d="M1153 51.6H1158V57M1153 51.6V57.4H1155" fill="none" stroke="#3d8fd6" stroke-width="1" /><path d="M1161 51.6H1166V55H1163" fill="none" stroke="#3d8fd6" stroke-width="1" /><circle cx="1155.6" cy="58.4" r="1.1" fill="#eaf3fb" stroke="#3d8fd6" stroke-width="0.9"/><circle cx="1160.6" cy="57.4" r="1.1" fill="#eaf3fb" stroke="#3d8fd6" stroke-width="0.9"/><path d="M1156.6 58.4H1159.6M1161.6 57.8L1163 59" fill="none" stroke="#3d8fd6" stroke-width="0.9" /><path d="M1152.6 63.6H1162.6L1166 59.6H1163L1161.4 61.6H1152.6Z" fill="#cfe4f6" stroke="#3d8fd6" stroke-width="0.9"/><path d="M1152.6 64.4H1162.6" fill="none" stroke="#2b7fc4" stroke-width="1" /><text x="1257.6" y="15.4" font-family="Liberation Sans" font-size="8"  fill="#4a4a4a">?</text><path d="M1254 18.6H1266M1253 21.6H1267" fill="none" stroke="#4a4a4a" stroke-width="1" /><path d="M1255.6 30V43M1266.6 30V43M1255.6 32.2H1266.6M1255.6 41.6H1266.6M1257.6 31L1256 32.2L1257.6 33.4M1264.6 31L1266.2 32.2L1264.6 33.4M1257.6 40.4L1256 41.6L1257.6 42.8M1264.6 40.4L1266.2 41.6L1264.6 42.8" fill="none" stroke="#4a4a4a" stroke-width="0.9" /><text x="1259" y="40" font-family="Liberation Sans" font-size="7.5"  fill="#4a4a4a">?</text><circle cx="1260.5" cy="58" r="6.8" fill="#2079c0"/><text x="1257.2" y="62.4" font-family="Liberation Sans" font-size="12" font-weight="bold" fill="#fff">?</text><text x="1356" y="15" font-family="Liberation Sans" font-size="6.5"  fill="#4a4a4a">?</text><text x="1362.4" y="15" font-family="Liberation Sans" font-size="6.5" font-weight="bold" fill="#4a4a4a">1</text><path d="M1362.4 15.4H1366.4" fill="none" stroke="#4a4a4a" stroke-width="0.8" /><path d="M1355.6 22L1361 16.6H1367" fill="none" stroke="#4a4a4a" stroke-width="1" /><path d="M1356 33.4H1364.4V43H1356Z" fill="#f7f7f7" stroke="#4a4a4a" stroke-width="1.1"/><path d="M1355 32.6H1365.4M1358.2 32.4V31H1362.2V32.4" fill="none" stroke="#4a4a4a" stroke-width="1" /><path d="M1358.8 35.4V41M1361.6 35.4V41" fill="none" stroke="#4a4a4a" stroke-width="1.2" /></svg><svg style="left:0;top:0" width="1600" height="859" viewBox="0 0 1600 859"><rect x="802.5" y="270.5" width="373" height="372" fill="none" stroke="#74a6e8" stroke-width="1"/><path d="M989.4 270V642" stroke="#eda0a8" stroke-width="1.3"/><path d="M1022 456.5H1175" stroke="#a4ee8c" stroke-width="1"/><path d="M805 456.5H988" stroke="#a4ee8c" stroke-width="1"/><path d="M837 642.5H849" stroke="#5a3cc8" stroke-width="1.2"/><path d="M459.4 630.5H1423" stroke="#ee913a" stroke-width="1.1" stroke-dasharray="133 10 13 10" fill="none"/><path d="M646.5 370L1390 611" stroke="#ee913a" stroke-width="1.1" stroke-dasharray="101 11.5 12 11.5" fill="none"/><path d="M301 313L1600 680.6" stroke="#c7427a" stroke-width="1"/><path d="M646.50 370.00C647.71 365.00 651.30 361.86 655.44 359.42C659.57 356.97 664.01 355.09 668.48 353.46C672.95 351.83 677.50 350.47 682.09 349.24C686.67 348.01 691.28 346.93 695.93 345.99C700.58 345.05 705.25 344.25 709.95 343.58C714.65 342.90 719.37 342.35 724.11 341.91C728.84 341.47 733.59 341.15 738.35 340.91C743.11 340.68 747.88 340.54 752.64 340.49C757.41 340.43 762.18 340.46 766.94 340.55C771.70 340.64 776.46 340.80 781.21 341.03C785.96 341.26 790.71 341.55 795.44 341.91C800.18 342.27 804.91 342.69 809.64 343.17C814.36 343.65 819.08 344.20 823.79 344.80C828.50 345.40 833.20 346.06 837.90 346.78C842.59 347.50 847.28 348.27 851.96 349.10C856.63 349.92 861.30 350.80 865.96 351.74C870.62 352.67 875.27 353.65 879.91 354.69C884.55 355.72 889.18 356.80 893.80 357.93C898.42 359.06 903.03 360.23 907.63 361.45C912.22 362.67 916.81 363.94 921.39 365.24C925.96 366.55 930.53 367.89 935.08 369.28C939.63 370.66 944.17 372.09 948.70 373.55C953.23 375.01 957.74 376.51 962.24 378.04C966.74 379.57 971.23 381.14 975.71 382.74C980.18 384.34 984.64 385.97 989.09 387.63C993.55 389.29 997.98 390.98 1002.41 392.70C1006.84 394.42 1011.25 396.17 1015.66 397.95C1020.06 399.72 1024.45 401.53 1028.84 403.35C1033.22 405.18 1037.60 407.03 1041.96 408.91C1046.32 410.78 1050.68 412.68 1055.03 414.60C1059.37 416.51 1063.71 418.45 1068.04 420.41C1072.37 422.37 1076.69 424.35 1081.01 426.34C1085.32 428.34 1089.63 430.35 1093.93 432.38C1098.23 434.40 1102.52 436.45 1106.81 438.50C1111.10 440.56 1115.38 442.63 1119.66 444.71C1123.93 446.79 1128.20 448.88 1132.47 450.99C1136.74 453.09 1141.00 455.21 1145.25 457.34C1149.50 459.47 1153.75 461.61 1157.99 463.77C1162.23 465.92 1166.47 468.09 1170.69 470.27C1174.92 472.45 1179.14 474.65 1183.36 476.85C1187.57 479.06 1191.78 481.28 1195.98 483.51C1200.18 485.75 1204.37 487.99 1208.55 490.25C1212.74 492.51 1216.92 494.79 1221.09 497.07C1225.25 499.36 1229.41 501.66 1233.57 503.98C1237.72 506.29 1241.86 508.62 1246.00 510.96C1250.14 513.30 1254.26 515.66 1258.38 518.03C1262.50 520.40 1266.61 522.79 1270.71 525.19C1274.81 527.59 1278.90 530.00 1282.98 532.43C1287.06 534.86 1291.13 537.30 1295.19 539.76C1299.26 542.21 1303.31 544.69 1307.35 547.18C1311.39 549.66 1315.42 552.17 1319.44 554.68C1323.46 557.20 1327.48 559.74 1331.47 562.28C1335.47 564.83 1339.46 567.40 1343.44 569.98C1347.42 572.56 1351.39 575.14 1355.34 577.77C1359.28 580.40 1363.20 583.09 1367.04 585.89C1370.89 588.70 1374.68 591.62 1378.36 594.75C1382.04 597.87 1385.68 601.18 1389.05 604.76C1392.42 608.34 1393.48 613.38 1389.67 616.31C1385.85 619.24 1378.81 617.04 1375.50 616.40" fill="none" stroke="#1f86ee" stroke-width="2.1" stroke-linejoin="round" stroke-linecap="round"/><path d="M646.50 370.00C646.91 374.65 648.64 378.50 651.15 381.84C653.67 385.19 656.97 388.04 660.51 390.71C664.05 393.37 667.76 395.90 671.44 398.40C675.12 400.90 678.83 403.33 682.58 405.69C686.32 408.05 690.10 410.35 693.91 412.56C697.72 414.78 701.56 416.92 705.45 418.97C709.33 421.03 713.25 423.00 717.21 424.89C721.18 426.77 725.18 428.57 729.21 430.29C733.25 432.01 737.32 433.66 741.41 435.24C745.50 436.83 749.63 438.34 753.77 439.81C757.91 441.27 762.07 442.68 766.25 444.05C770.43 445.41 774.62 446.74 778.82 448.02C783.02 449.31 787.24 450.57 791.46 451.79C795.69 453.02 799.92 454.22 804.16 455.41C808.39 456.60 812.64 457.76 816.88 458.93C821.13 460.09 825.38 461.24 829.62 462.40C833.87 463.55 838.12 464.71 842.36 465.87C846.60 467.04 850.84 468.22 855.08 469.40C859.32 470.58 863.56 471.77 867.79 472.96C872.02 474.16 876.25 475.36 880.48 476.57C884.71 477.77 888.94 478.98 893.17 480.19C897.39 481.41 901.62 482.62 905.84 483.84C910.07 485.06 914.29 486.28 918.52 487.50C922.74 488.72 926.96 489.95 931.19 491.17C935.41 492.39 939.64 493.61 943.86 494.83C948.09 496.05 952.31 497.26 956.54 498.48C960.76 499.69 964.99 500.91 969.22 502.12C973.44 503.33 977.67 504.55 981.90 505.76C986.13 506.97 990.35 508.18 994.58 509.38C998.81 510.59 1003.04 511.80 1007.27 513.00C1011.50 514.21 1015.73 515.41 1019.96 516.62C1024.19 517.82 1028.42 519.02 1032.65 520.23C1036.88 521.43 1041.11 522.63 1045.34 523.83C1049.57 525.03 1053.80 526.23 1058.04 527.42C1062.27 528.62 1066.50 529.82 1070.73 531.02C1074.96 532.21 1079.20 533.41 1083.43 534.60C1087.66 535.80 1091.90 536.99 1096.13 538.19C1100.36 539.38 1104.60 540.57 1108.83 541.77C1113.06 542.96 1117.30 544.15 1121.53 545.34C1125.76 546.54 1130.00 547.73 1134.23 548.92C1138.47 550.11 1142.70 551.30 1146.93 552.49C1151.17 553.68 1155.40 554.87 1159.64 556.06C1163.87 557.25 1168.11 558.44 1172.34 559.63C1176.58 560.82 1180.81 562.01 1185.04 563.20C1189.28 564.39 1193.51 565.58 1197.75 566.77C1201.98 567.96 1206.22 569.15 1210.45 570.34C1214.69 571.53 1218.92 572.72 1223.15 573.91C1227.39 575.10 1231.62 576.30 1235.86 577.49C1240.09 578.68 1244.32 579.87 1248.56 581.06C1252.79 582.25 1257.03 583.44 1261.26 584.64C1265.49 585.83 1269.73 587.02 1273.96 588.22C1278.19 589.41 1282.42 590.60 1286.66 591.80C1290.89 592.99 1295.12 594.19 1299.35 595.38C1303.59 596.58 1307.82 597.78 1312.05 598.97C1316.28 600.17 1320.51 601.37 1324.74 602.57C1328.97 603.77 1333.21 604.97 1337.44 606.17C1341.67 607.37 1345.90 608.57 1350.13 609.77C1354.36 610.97 1358.59 612.18 1362.81 613.38C1367.04 614.59 1371.27 615.79 1375.50 617.00" fill="none" stroke="#1f86ee" stroke-width="2.1" stroke-linejoin="round" stroke-linecap="round"/><path d="M812 458.2L1380 618.6" stroke="#8a3cc0" stroke-width="1.1" opacity="0.8"/><path d="M989.5 456.5V430M989.5 456.5H1016" stroke="#555" stroke-width="1.1"/><path d="M987.4 436.5L989.5 428.5L991.6 436.5Z" fill="#c8c8c8" stroke="#555" stroke-width="0.8"/><path d="M1010 454.6L1018.5 456.5L1010 458.4Z" fill="#888" stroke="#555" stroke-width="0.8"/><circle cx="989.5" cy="456.5" r="1.4" fill="#e04040"/><path d="M987.4 420.5L990 424L992.6 420.5M990 424V427.5" stroke="#555" stroke-width="0.9" fill="none"/><path d="M1018 449.5L1023.5 455.5M1023.5 449.5L1018 455.5" stroke="#555" stroke-width="0.9" fill="none"/><path d="M646.5 370L615.6 464.5" stroke="#1c1c1c" stroke-width="1.1"/><path d="M1392 612L1361.6 705" stroke="#1c1c1c" stroke-width="1.1"/><path d="M618 457L1363.3 698.8" stroke="#1c1c1c" stroke-width="1.1"/><path d="M618.0 457.0L635.0 459.8L633.4 464.7Z" fill="#1c1c1c"/><path d="M1363.3 698.8L1346.3 696.0L1347.9 691.1Z" fill="#1c1c1c"/><path d="M610.8 400.8A844 844 0 0 0 579 630.5" fill="none" stroke="#1c1c1c" stroke-width="1.1"/><path d="M610.8 400.8L608.5 417.8L603.5 416.4Z" fill="#1c1c1c"/><path d="M579.0 630.5L576.4 613.5L581.6 613.5Z" fill="#1c1c1c"/><path d="M1100.4 494.7L1093.6 515" stroke="#1c1c1c" stroke-width="1.1"/><path d="M1086.8 536.2Q1077.5 568 1072.9 601.4" fill="none" stroke="#1c1c1c" stroke-width="1.1"/><path d="M1093.6 515.0L1096.0 501.0L1100.1 502.4Z" fill="#1c1c1c"/><path d="M1086.8 536.2L1085.5 550.3L1081.3 549.2Z" fill="#1c1c1c"/><path d="M562.5 490.6L586 492.6L581.6 533.8L558.2 531.2Z" fill="none" stroke="#6ad6d6" stroke-width="1.6"/><g transform="translate(579.5 513) rotate(-83.5) scale(0.74 1)"><text x="0" y="0" text-anchor="middle" font-family="Liberation Sans" font-style="italic" font-size="20" fill="#1c1c1c">15,8°</text></g><g transform="translate(608.6 517) rotate(-81.5) scale(0.93 1)"><text x="0" y="0" text-anchor="middle" font-family="Liberation Sans" font-style="italic" font-size="19" fill="#1c1c1c">(v24)</text></g><g transform="translate(994.6 570) rotate(17.8) scale(0.85 1)"><text x="0" y="0" text-anchor="middle" font-family="Liberation Sans" font-style="italic" font-size="20" fill="#1c1c1c">105</text></g><g transform="translate(1070.2 572.5) rotate(-78) scale(0.88 1)"><text x="0" y="0" text-anchor="middle" font-family="Liberation Sans" font-style="italic" font-size="20" fill="#1c1c1c">2,27°</text></g><path d="M1417.5 625L1428.5 636M1428.5 625L1417.5 636" stroke="#38d8e0" stroke-width="2.2"/><path d="M1426 637.5L1438.5 625.6" stroke="#8a3cc0" stroke-width="1.1"/><circle cx="1432" cy="632" r="1.6" fill="none" stroke="#8a3cc0" stroke-width="0.9"/></svg><svg style="left:0;top:0" width="1600" height="859" viewBox="0 0 1600 859"><rect x="698" y="83" width="657" height="22" fill="#8e8e8e"/><rect x="699" y="83" width="655" height="21" fill="#efefef"/><rect x="701.2" y="87.6" width="1.4" height="1.4" fill="#555"/><rect x="701.2" y="89.8" width="1.4" height="1.4" fill="#555"/><rect x="703.5" y="87.6" width="1.4" height="1.4" fill="#555"/><rect x="703.5" y="89.8" width="1.4" height="1.4" fill="#555"/><rect x="705.8" y="87.6" width="1.4" height="1.4" fill="#555"/><rect x="705.8" y="89.8" width="1.4" height="1.4" fill="#555"/><rect x="708.1" y="87.6" width="1.4" height="1.4" fill="#555"/><rect x="708.1" y="89.8" width="1.4" height="1.4" fill="#555"/><rect x="712" y="83" width="1" height="21" fill="#9a9a9a"/><rect x="713.4" y="83" width="21.2" height="21" fill="#404040"/><rect x="736.4" y="83" width="38.2" height="21" fill="#404040"/><rect x="776.6" y="83" width="20.2" height="21" fill="#404040"/><rect x="799" y="83" width="21.0" height="21" fill="#404040"/><rect x="1057" y="83" width="20.8" height="21" fill="#404040"/><rect x="1203" y="83" width="20.8" height="21" fill="#404040"/><rect x="1290.2" y="83" width="37.8" height="21" fill="#404040"/><rect x="735.0" y="83" width="1" height="21" fill="#a8a8a8"/><rect x="775.1" y="83" width="1" height="21" fill="#a8a8a8"/><rect x="797.4" y="83" width="1" height="21" fill="#a8a8a8"/><rect x="928.0999999999999" y="84" width="1.4" height="20" fill="#8c8c8c"/><rect x="1118.7" y="84" width="1.4" height="20" fill="#8c8c8c"/><rect x="1200.5" y="84" width="1.4" height="20" fill="#8c8c8c"/><rect x="1288.3" y="84" width="1.4" height="20" fill="#8c8c8c"/><path d="M718.6 88H723.8V93.6H729.8V99.4H718.6Z" fill="none" stroke="#3dab78" stroke-width="1.25" /><rect x="717.45" y="86.85" width="2.3" height="2.3" fill="#3dab78"/><rect x="722.65" y="86.85" width="2.3" height="2.3" fill="#3dab78"/><rect x="722.65" y="92.44999999999999" width="2.3" height="2.3" fill="#3dab78"/><rect x="728.65" y="92.44999999999999" width="2.3" height="2.3" fill="#3dab78"/><rect x="728.65" y="98.25" width="2.3" height="2.3" fill="#3dab78"/><rect x="717.45" y="98.25" width="2.3" height="2.3" fill="#3dab78"/><path d="M741.4 95.6L748 88.6C750.4 86.4 754 90 751.8 92.4L746.2 98.6" fill="none" stroke="#f4f4f4" stroke-width="2.2" stroke-linecap="round"/><path d="M744.6 98.4L750.6 92" fill="none" stroke="#cfcfcf" stroke-width="1.2" /><path d="M762.0 90.1H771.0L766.5 95.1Z" fill="#fff"/><path d="M781.6 91L788.6 84.6M783.8 93.4L790.8 87" fill="none" stroke="#d8d8d8" stroke-width="1.2" /><path d="M790.4 93V99.4M786.6 99.4H794.4" fill="none" stroke="#e8e8e8" stroke-width="1.2" /><path d="M803.6 96.4L810.6 90M805.4 98.8L811.4 93.2" fill="none" stroke="#d8d8d8" stroke-width="1.1" /><path d="M809.4 89.4C811.4 86.2 816.4 86.2 818.4 89.4C816.4 92.4 811.4 92.4 809.4 89.4Z" fill="none" stroke="#f0f0f0" stroke-width="1.2" /><circle cx="813.9" cy="89.3" r="1.5" fill="#f0f0f0"/><path d="M813.6 93.4V99M810.4 99.2H817" fill="none" stroke="#e8e8e8" stroke-width="1.2" /><path d="M829.4 89.6C831.4 86.2 836.8 86.2 838.8 89.6C836.8 92.8 831.4 92.8 829.4 89.6Z" fill="none" stroke="#2a2a2a" stroke-width="1.6" /><circle cx="834.1" cy="89.5" r="1.8" fill="#2a2a2a"/><path d="M827.6 94.4V98.8H832.6" fill="none" stroke="#444" stroke-width="1.3" /><path d="M849.6 87V100M854.6 87V100M859 87V100M847.4 90.2H860.8M847.4 96H860.8" fill="none" stroke="#2a2a2a" stroke-width="1.3" /><path d="M870.4 90.39999999999999H878.4L874.4 94.8Z" fill="#2a2a2a"/><path d="M888 99.4H893.6V87.6H900" fill="none" stroke="#4a4a4a" stroke-width="1.3" /><circle cx="914.4" cy="92.4" r="4.4" fill="#f2f2f2" stroke="#2a2a2a" stroke-width="1.3"/><path d="M914.4 92.4V88.6A3.8 3.8 0 0 1 918.2 92.4Z" fill="#2a2a2a"/><path d="M914.4 92.4H910.8A3.6 3.6 0 0 0 914.4 96Z" fill="#777"/><path d="M917.6 95.8L921.8 99.6" fill="none" stroke="#2a2a2a" stroke-width="1.9" /><circle cx="938.4" cy="92" r="4.5" fill="#f6f6f6" stroke="#6a6a6a" stroke-width="1.1"/><path d="M938.6 90V94.4M938.6 88.4V89.2" fill="none" stroke="#9a9a9a" stroke-width="1" /><path d="M941.8 95.4L946.2 99.4" fill="none" stroke="#333" stroke-width="1.8" /><path d="M946.6 88.6V89.6M946.6 90.8V93.6" fill="none" stroke="#777" stroke-width="1" /><path d="M957.0 90.39999999999999H965.0L961 94.8Z" fill="#2a2a2a"/><path d="M978.4 94.6H988.4L985 99.6H975Z" fill="#2a2a2a"/><path d="M981.6 96V91H979.4L982.2 87L985 91H982.8V96Z" fill="#f4f4f4" stroke="#2a2a2a" stroke-width="1"/><rect x="997.4" y="94.6" width="5.4" height="5" fill="#f4f4f4" stroke="#2a2a2a" stroke-width="1.3"/><path d="M1000.2 93.6L1002.6 89.4L1006 92.2" fill="none" stroke="#2a2a2a" stroke-width="1.1" /><path d="M1003.4 97H1009M1007 95.4L1009 97L1007 98.6" fill="none" stroke="#2a2a2a" stroke-width="1" /><path d="M1004 89.2L1008 94" fill="none" stroke="#2a2a2a" stroke-width="0.9" stroke-dasharray="1.4 1"/><path d="M1025.4 96.4V89M1025.4 96.4H1032.4M1025.4 96.4L1020.6 100" fill="none" stroke="#2a2a2a" stroke-width="1.2" /><path d="M1024 90.4L1025.4 88L1026.8 90.4M1030.6 95L1032.8 96.4L1030.6 97.8" fill="none" stroke="#2a2a2a" stroke-width="1" /><rect x="1023.8" y="94.8" width="3.2" height="3.2" fill="#f4f4f4" stroke="#2a2a2a" stroke-width="0.9"/><path d="M1041.6 90.39999999999999H1049.6L1045.6 94.8Z" fill="#2a2a2a"/><path d="M1067.4 86.4L1074 89.4V96.8L1067.4 100L1060.8 96.8V89.4Z" fill="#f6f6f6"/><path d="M1060.8 89.4L1067.4 92.6L1074 89.4M1067.4 92.6V100" fill="none" stroke="#404040" stroke-width="0.9" /><path d="M1090 86.4L1096.8 89.4V96.8L1090 100L1083.4 96.8V89.4ZM1083.4 89.4L1090 92.6L1096.8 89.4M1090 92.6V100" fill="none" stroke="#2a2a2a" stroke-width="1.1" /><path d="M1090 86.4V93.4L1083.4 96.8M1090 93.4L1096.8 96.8" fill="none" stroke="#2a2a2a" stroke-width="0.8" /><path d="M1105.8 90.39999999999999H1113.8L1109.8 94.8Z" fill="#2a2a2a"/><path d="M1127.6 92.6C1130 89 1135.4 89 1137.8 92.6C1135.4 96.2 1130 96.2 1127.6 92.6Z" fill="none" stroke="#2a2a2a" stroke-width="1.4" /><circle cx="1132.7" cy="92.6" r="1.7" fill="#2a2a2a"/><path d="M1126 87.2L1138.4 99" fill="none" stroke="#2a2a2a" stroke-width="1.1" /><path d="M1147.6 90.39999999999999H1155.6L1151.6 94.8Z" fill="#2a2a2a"/><path d="M1165 88.2H1178V97.6L1176.6 98.6V97.6H1165Z" fill="#2a2a2a"/><path d="M1167 92.8C1169 90 1174 90 1176 92.8C1174 95.6 1169 95.6 1167 92.8Z" fill="none" stroke="#e8e8e8" stroke-width="1.1" /><circle cx="1171.5" cy="92.8" r="1.5" fill="#bdbdbd"/><path d="M1187.6 90.39999999999999H1195.6L1191.6 94.8Z" fill="#2a2a2a"/><path d="M1208.4 97L1218.4 89.6" fill="none" stroke="#e8e8e8" stroke-width="1.1" /><circle cx="1207.8" cy="97.4" r="1.5" fill="#404040" stroke="#f0f0f0" stroke-width="1"/><circle cx="1219" cy="89.2" r="1.5" fill="#404040" stroke="#f0f0f0" stroke-width="1"/><path d="M1209.4 87.4L1211.2 89.4L1209.4 91.4L1207.6000000000001 89.4Z" fill="none" stroke="#e0e0e0" stroke-width="0.9"/><path d="M1217.6 96L1219.3999999999999 98L1217.6 100L1215.8 98Z" fill="none" stroke="#e0e0e0" stroke-width="0.9"/><path d="M1230.4 88H1238.4V99H1230.4Z" fill="#f4f4f4" stroke="#2a2a2a" stroke-width="1.2"/><path d="M1231 88.4L1238 98.6V88.4Z" fill="#2a2a2a"/><path d="M1230.4 88L1233 86.6H1240.6L1238.4 88" fill="none" stroke="#2a2a2a" stroke-width="1" /><path d="M1237 93.6H1242.6V98L1240 100H1235.6V95.6Z" fill="#555" stroke="#2a2a2a" stroke-width="0.8"/><path d="M1252.6 90.6L1256.4 87.4L1258.8 89.6V99.4H1252.6Z" fill="#2a2a2a"/><path d="M1255.6 91L1259.6 88.6L1263.6 94.6V99.4H1255.6Z" fill="#d8d8d8" stroke="#2a2a2a" stroke-width="1"/><path d="M1257.4 93L1261.6 96L1257.4 98.4Z" fill="#2a2a2a"/><path d="M1274.6 90.39999999999999H1282.6L1278.6 94.8Z" fill="#2a2a2a"/><path d="M1294 87.6H1307.4L1302.4 93.6V100H1299V93.6Z" fill="#fafafa"/><path d="M1315.7 90.1H1324.7L1320.2 95.1Z" fill="#fff"/><path d="M1344.4 89.2L1347 86.6C1348 85.8 1349.8 87.6 1349 88.6L1346.4 91.2L1347.2 92L1345.8 93.4L1342.2 89.8L1343.6 88.4Z" fill="#2a2a2a"/><path d="M1343.4 91L1345 92.6L1339.6 98L1337 99.6L1336.6 99.2L1338 96.6Z" fill="#fafafa" stroke="#2a2a2a" stroke-width="1"/><path d="M7.4 87.4V99M7.4 90.4H12.6M7.4 94.6H12.6M7.4 98.8H12.6" fill="none" stroke="#2a2a2a" stroke-width="1.2" /><circle cx="13" cy="90.4" r="1.1" fill="#2a2a2a"/><circle cx="13" cy="94.6" r="1.1" fill="#2a2a2a"/><circle cx="13" cy="98.8" r="1.1" fill="#2a2a2a"/><circle cx="7.4" cy="87.6" r="1.1" fill="#2a2a2a"/><rect x="6.6" y="108.6" width="9" height="12" fill="#4a4a4a" stroke="#f0f0f0" stroke-width="1.2"/><rect x="8.4" y="110.60000000000001" width="1.8" height="1.8" fill="#cfcfcf"/><rect x="11.4" y="110.9" width="2.8" height="1.1" fill="#f0f0f0"/><rect x="8.4" y="113.8" width="1.8" height="1.8" fill="#cfcfcf"/><rect x="11.4" y="114.1" width="2.8" height="1.1" fill="#f0f0f0"/><rect x="8.4" y="117.0" width="1.8" height="1.8" fill="#cfcfcf"/><rect x="11.4" y="117.3" width="2.8" height="1.1" fill="#f0f0f0"/><text x="6.4" y="139" font-family="Liberation Serif" font-style="italic" font-size="17" fill="#333">f</text><text x="10.6" y="141" font-family="Liberation Sans" font-size="10.5" fill="#333">x</text><path d="M5.4 150H16.6V153H5.4L4.2 151.5Z" fill="#2a2a2a"/><path d="M5.4 154.8H16.6V157.8H5.4L4.2 156.3Z" fill="#2a2a2a"/><path d="M5.4 159.6H16.6V162.6H5.4L4.2 161.1Z" fill="#2a2a2a"/><path d="M295.90 90.00L297.70 90.00M294.90 92.40L296.18 93.68M292.50 93.40L292.50 95.20M290.10 92.40L288.82 93.68M289.10 90.00L287.30 90.00M290.10 87.60L288.82 86.32M292.50 86.60L292.50 84.80M294.90 87.60L296.18 86.32" fill="none" stroke="#2a2a2a" stroke-width="1.7" /><circle cx="292.5" cy="90" r="3" fill="none" stroke="#2a2a2a" stroke-width="1.4"/><path d="M29 105.6L32.6 101.6L36.4 105.6M30.6 105.6V112.8H37.8V105.6" fill="none" stroke="#17643a" stroke-width="1.3" /><path d="M32 107.2H37M32 109.4H37M32 111.4H37" fill="none" stroke="#17643a" stroke-width="1.2" /><path d="M27 106.4L32.6 101.2V104.2Z" fill="#17643a"/><circle cx="264.6" cy="107.6" r="6.4" fill="#1f2d27"/><text x="261.4" y="111.8" font-family="Liberation Sans" font-weight="bold" font-size="11.5" fill="#5ccb8a">?</text><path d="M282.6 101.4V113.4M282.6 104.4H287.4M282.6 108.8H287.4M282.6 113.2H287.4" fill="none" stroke="#f0f0f0" stroke-width="1.1" /><rect x="287.2" y="103.4" width="2.8" height="2" fill="#f0f0f0"/><rect x="287.2" y="107.8" width="2.8" height="2" fill="#f0f0f0"/><rect x="287.2" y="112.2" width="2.8" height="2" fill="#f0f0f0"/><circle cx="282.6" cy="101.6" r="1.1" fill="none" stroke="#f0f0f0" stroke-width="0.8"/><rect x="300.6" y="105" width="21.6" height="20.6" fill="#404040"/><path d="M306 110V121H311.4V110" fill="none" stroke="#f0f0f0" stroke-width="1.1" /><path d="M306 112.6H311.4" fill="none" stroke="#f0f0f0" stroke-width="1" /><circle cx="306" cy="109.6" r="1" fill="#f0f0f0"/><circle cx="311.4" cy="109.6" r="1" fill="none" stroke="#f0f0f0" stroke-width="0.7"/><text x="313.4" y="115.6" font-family="Liberation Sans" font-weight="bold" font-size="5.5" fill="#f0f0f0">11</text><text x="313.4" y="120.8" font-family="Liberation Sans" font-weight="bold" font-size="5.5" fill="#f0f0f0">12</text><path d="M328 109.6V120.6H331.6M328 112.4H331.8M331.8 112.4V120.6M331.8 115.4H335.4M331.8 118.4H335.4" fill="none" stroke="#333" stroke-width="1.1" /><circle cx="328" cy="109.4" r="1.1" fill="#333"/><circle cx="332" cy="121" r="1.1" fill="#333"/><circle cx="336" cy="115.4" r="1.1" fill="#333"/><circle cx="336" cy="118.4" r="1.1" fill="#333"/><path d="M333.4 137.4H337.8L335.6 140.8Z" fill="#222"/><path d="M342.4 133.4H352.6L355.8 136.4V145.8H342.4Z" fill="#262626"/><rect x="343.8" y="135.2" width="8.8" height="9.2" rx="1" fill="#ececec"/><circle cx="348.6" cy="140.2" r="3.1" fill="#2a2a2a"/><circle cx="349.6" cy="139.2" r="1.2" fill="#d8d8d8"/><path d="M306.4 160.6C309 156.4 314.6 156.4 317.2 160.6C314.6 164.8 309 164.8 306.4 160.6Z" fill="none" stroke="#222" stroke-width="1.4" /><circle cx="311.8" cy="160.6" r="2" fill="#222"/><circle cx="311.8" cy="160.6" r="0.7" fill="#ddd"/><path d="M342.4 159.2L346.4 161.6L342.4 164Z" fill="#222"/><path d="M355.6 155V164H364M355.6 164L350.6 168.2" fill="none" stroke="#333" stroke-width="1.1" /><circle cx="372" cy="161.4" r="3.2" fill="#222"/><path d="M351.4 176.6H356.4V184.2H363.6V189.6H351.4Z" fill="#e4e4e4" stroke="#3a3a3a" stroke-width="1.2"/><path d="M352 190.4H364.2" fill="none" stroke="#8a8a8a" stroke-width="1" /><rect x="368.2" y="181" width="7.2" height="5.6" fill="#222"/><path d="M369.8 181V179.4C369.8 177.2 373.8 177.2 373.8 179.4V181" fill="none" stroke="#222" stroke-width="1.3" /><rect x="371.3" y="182.6" width="1" height="2.2" fill="#ddd"/><text x="379.6" y="185.4" font-family="Liberation Sans" font-size="9.5" fill="#222">(</text><text x="386.4" y="185.4" font-family="Liberation Sans" font-size="9.5" fill="#222">)</text><path d="M382.6 181.6H386.4" fill="none" stroke="#222" stroke-width="1.4" /><path d="M26.6 838H36V844.4H33.4L34.4 847L31 844.4H26.6Z" fill="#2a2a2a"/><path d="M288 838L294 844M294 838L288 844" fill="none" stroke="#444" stroke-width="1" /><rect x="1539.4" y="107.4" width="44.6" height="43" fill="#e6e6e6" opacity="0.55"/><rect x="1541" y="109" width="41.4" height="39.8" fill="#424242"/><path d="M1548 115H1560.6V129.6H1575.6V142.2H1548Z" fill="none" stroke="#4fd08a" stroke-width="2" /><circle cx="1548" cy="115" r="2.3" fill="#3a6a50" stroke="#4fd08a" stroke-width="1.6"/><circle cx="1560.6" cy="115" r="2.3" fill="#3a6a50" stroke="#4fd08a" stroke-width="1.6"/><circle cx="1560.6" cy="129.6" r="2.3" fill="#3a6a50" stroke="#4fd08a" stroke-width="1.6"/><circle cx="1575.6" cy="129.6" r="2.3" fill="#3a6a50" stroke="#4fd08a" stroke-width="1.6"/><circle cx="1575.6" cy="142.2" r="2.3" fill="#3a6a50" stroke="#4fd08a" stroke-width="1.6"/><circle cx="1548" cy="142.2" r="2.3" fill="#3a6a50" stroke="#4fd08a" stroke-width="1.6"/><rect x="1567.6" y="116" width="10.6" height="2.6" fill="#4fd08a"/><rect x="360.4" y="768" width="3" height="31" fill="#6fd070"/><path d="M361.9 758.4L365 771H358.8Z" fill="#5cc460"/><rect x="366" y="800.6" width="31" height="3.8" fill="#e4606e"/><path d="M408 802.5L395.4 799.2V805.8Z" fill="#e05866"/><circle cx="361.9" cy="802.5" r="4.6" fill="#3c66b4" stroke="#d6d84a" stroke-width="1.5"/><circle cx="361.9" cy="802.5" r="5.6" fill="none" stroke="#6a6a50" stroke-width="0.5"/><path d="M359.2 745.4L362.2 749L365.2 745.4M362.2 749V752.6" fill="none" stroke="#5aaa5c" stroke-width="1.2" /><path d="M412.2 799.4L417.8 806M417.8 799.4L412.2 806" fill="none" stroke="#d05060" stroke-width="1.2" /></svg>
</div>
</body></html>
